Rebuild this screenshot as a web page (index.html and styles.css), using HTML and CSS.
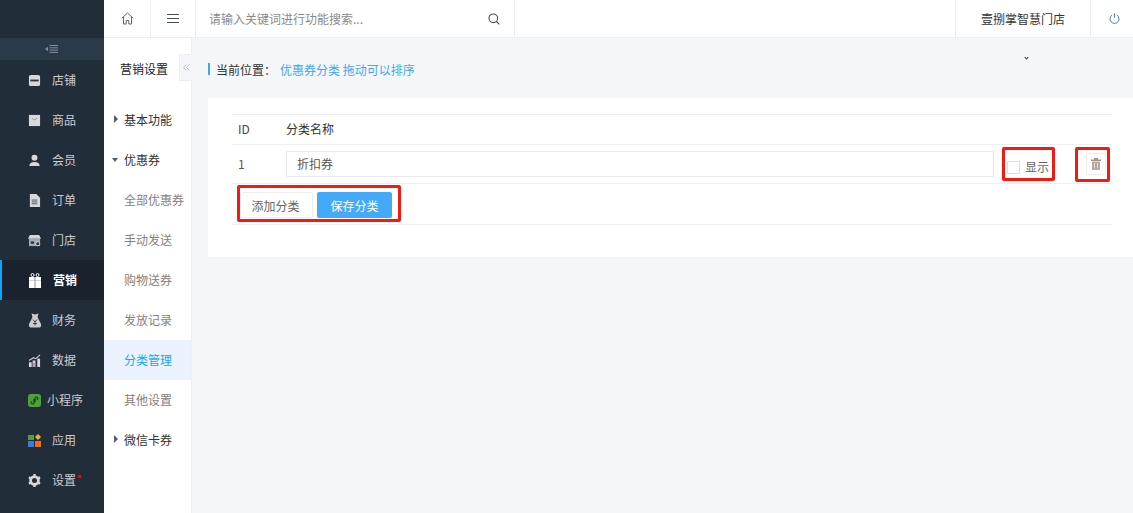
FILE: index.html
```html
<!DOCTYPE html>
<html lang="zh-CN">
<head>
<meta charset="utf-8">
<title>优惠券分类</title>
<link rel="stylesheet" href="styles.css">
</head>
<body>
<div class="app">
  <aside class="sidebar">
    <div class="logo"></div>
    <div class="collapse-bar">
      <svg width="14" height="10" viewBox="0 0 14 10"><path d="M0 5l3-2.200v4.400z" fill="#7f8c99"/><path d="M4.500 1.500h8.500M4.500 3.800h8.500M4.500 6.100h8.500M4.500 8.400h8.500" stroke="#7f8c99" stroke-width="1"/></svg>
    </div>
    <nav class="nav">
      <a class="nav-item"><svg class="nav-icon" viewBox="0 0 14 14"><rect x="1" y="1" width="12" height="12" rx="2" fill="#d6d8da"/><path d="M2.500 6h9v2h-9z" fill="#2a3542"/></svg><span class="nav-label">店铺</span></a>
      <a class="nav-item"><svg class="nav-icon" viewBox="0 0 14 14"><path d="M1 1h12v12H1z" fill="#d6d8da"/><path d="M4.500 4.500q2.500 3.500 5 0" fill="none" stroke="#8a929b"/></svg><span class="nav-label">商品</span></a>
      <a class="nav-item"><svg class="nav-icon" viewBox="0 0 14 14"><circle cx="7" cy="4" r="3.200" fill="#d6d8da"/><path d="M1.500 13q0-4.500 5.500-4.500T12.500 13z" fill="#d6d8da"/></svg><span class="nav-label">会员</span></a>
      <a class="nav-item"><svg class="nav-icon" viewBox="0 0 14 14"><path d="M2 0h7l4 4v10H2z" fill="#d6d8da"/><path d="M4 6.500h6M4 8.500h6M4 10.500h6" stroke="#4a5560"/></svg><span class="nav-label">订单</span></a>
      <a class="nav-item"><svg class="nav-icon" viewBox="0 0 14 14"><path d="M2 1h10l2 4H0z" fill="#d6d8da"/><path d="M1 5h12v8H1z" fill="#a3aab0"/><circle cx="10.500" cy="10.500" r="2.200" fill="#2a3542" stroke="#d6d8da"/><path d="M3 8h3.500v2.500H3z" fill="#2a3542"/></svg><span class="nav-label">门店</span></a>
      <a class="nav-item active"><svg class="nav-icon nav-icon-tall" viewBox="0 0 14 15"><path d="M1 4h12v11H1z" fill="#fff"/><path d="M1 7.500h12" stroke="#b8bcc2" stroke-width=".6"/><path d="M7 4v11" stroke="#8c939b" stroke-width="1"/><circle cx="4.500" cy="2" r="1.500" fill="none" stroke="#fff"/><circle cx="9.500" cy="2" r="1.500" fill="none" stroke="#fff"/></svg><span class="nav-label">营销</span></a>
      <a class="nav-item"><svg class="nav-icon nav-icon-tall" viewBox="0 0 14 15"><path d="M3.500 0.500l3.500 1 3.500-1L9.500 4l3.500 7q.5 3-1.500 3.500h-9Q.5 14 1 11l3.500-7z" fill="#c9cbce"/><path d="M5 6.500l2 2.500 2-2.500M7 9v3.500M5 10.500h4" stroke="#3a4656" fill="none"/></svg><span class="nav-label">财务</span></a>
      <a class="nav-item"><svg class="nav-icon" viewBox="0 0 14 14"><path d="M1 9h3v5H1zM5 7h3v7H5z" fill="#d6d8da"/><path d="M5.500 9.500v4.500M7.500 9.500v4.500" stroke="#b45aa5"/><path d="M10 5h3v9h-3z" fill="#d6d8da"/><path d="M1 7l5-3 2.500 1L13 1" fill="none" stroke="#c9ccd0" stroke-width="1.200"/></svg><span class="nav-label">数据</span></a>
      <a class="nav-item nav-wide"><svg class="nav-icon" viewBox="0 0 12 12"><rect width="12" height="12" rx="2.500" fill="#4ea03a"/><path d="M5.500 4.500v3.500a1.300 1.300 0 1 1-1.500-1.300M6.500 7.500V4a1.300 1.300 0 1 1 1.500 1.300" fill="none" stroke="#1d3a1a" stroke-width="1"/></svg><span class="nav-label">小程序</span></a>
      <a class="nav-item"><svg class="nav-icon" viewBox="0 0 13 13"><path d="M0 1h6v5H0z" fill="#4ea03a"/><path d="M10 0l3 3-3 3-3-3z" fill="#f0b429"/><path d="M0 7h6v6H0z" fill="#3f78e0"/><path d="M7 7h6v6H7z" fill="#ee6c1a"/></svg><span class="nav-label">应用</span></a>
      <a class="nav-item"><svg class="nav-icon" viewBox="0 0 14 14"><circle cx="7" cy="7" r="4.200" fill="none" stroke="#d6d8da" stroke-width="3"/><path d="M7 0v3M7 11v3M1 3.500l2.500 1.500M10.500 9l2.500 1.500M1 10.500L3.500 9M10.500 5L13 3.500" stroke="#d6d8da" stroke-width="2.500"/></svg><span class="nav-label dot">设置</span></a>
    </nav>
  </aside>

  <div class="workspace">
    <header class="topbar">
      <a class="top-btn"><svg width="13" height="13" viewBox="0 0 13 13" fill="none" stroke="#5a6570"><path d="M.8 6.200L6.500 1l5.700 5.200"/><path d="M2.500 5v7h2.700V8.500h2.600V12h2.700V5"/></svg></a>
      <a class="top-btn top-menu"><svg width="12" height="9" viewBox="0 0 12 9" stroke="#444c55"><path d="M0 .5h12M0 4.500h12M0 8.500h12"/></svg></a>
      <div class="search">
        <span class="search-text">请输入关键词进行功能搜索...</span>
        <svg width="12" height="12" viewBox="0 0 12 12" fill="none" stroke="#444c55" stroke-width="1.100"><circle cx="5.300" cy="5.300" r="4.300"/><path d="M8.500 8.500l2.800 2.800"/></svg>
      </div>
      <div class="top-spacer"></div>
      <div class="store">壹捌掌智慧门店</div>
      <a class="top-power"><svg width="11" height="11" viewBox="0 0 11 11" fill="none" stroke="#557b9f"><path d="M3.200 2a4.500 4.500 0 1 0 4.600 0"/><path d="M5.500 .3v4.400"/></svg></a>
    </header>

    <div class="body-row">
      <aside class="subnav">
        <div class="subnav-title">营销设置</div>
        <div class="collapse-tab">
          <svg width="7" height="7" viewBox="0 0 7 7" fill="none" stroke="#b4c0cc"><path d="M3.300.5L.7 3.500l2.600 3M6.300.5L3.700 3.500l2.600 3"/></svg>
        </div>
        <a class="sub-group"><i class="tri tri-right"></i>基本功能</a>
        <a class="sub-group"><i class="tri tri-down"></i>优惠券</a>
        <a class="sub-item">全部优惠券</a>
        <a class="sub-item">手动发送</a>
        <a class="sub-item">购物送券</a>
        <a class="sub-item">发放记录</a>
        <a class="sub-item current">分类管理</a>
        <a class="sub-item">其他设置</a>
        <a class="sub-group"><i class="tri tri-right"></i>微信卡券</a>
      </aside>

      <main class="content">
        <div class="crumb-row">
          <div class="crumb"><span class="crumb-label">当前位置：</span><span class="crumb-link">优惠券分类 拖动可以排序</span></div>
          <span class="caret"></span>
        </div>
        <section class="panel">
          <div class="table">
            <div class="row row-head">
              <div class="col-id">ID</div>
              <div class="col-name">分类名称</div>
            </div>
            <div class="row row-item">
              <div class="col-id id-value">1</div>
              <div class="col-name"><div class="text-input">折扣券</div></div>
              <div class="red-box show-box"><span class="checkbox"></span><span class="show-label">显示</span></div>
              <div class="red-box del-box"><span class="del-btn"><svg width="10" height="12" viewBox="0 0 10 12"><path d="M0 1.500h10v1.500H0zM3 0h4v1.500H3z" fill="#a2978f"/><path d="M1 3.500h8V12H1z" fill="#b5a9a2"/><path d="M3.500 5v5.500M6.500 5v5.500" stroke="#dfdbd8"/></svg></span></div>
            </div>
            <div class="row row-actions">
              <div class="red-box btn-box">
                <a class="btn btn-plain">添加分类</a>
                <a class="btn btn-primary">保存分类</a>
              </div>
            </div>
          </div>
        </section>
      </main>
    </div>
  </div>
</div>
</body>
</html>
```

FILE: styles.css
```css
* { box-sizing: border-box; }
html, body { margin: 0; padding: 0; height: 100%; }
body {
  font-family: "Noto Sans CJK SC", "Liberation Sans", sans-serif;
  font-size: 12px;
  color: #333;
  background: #f5f6f8;
  overflow: hidden;
}
a { color: inherit; text-decoration: none; }
.app { display: flex; width: 1133px; height: 513px; }

.sidebar { width: 104px; flex: none; background: #222d3a; display: flex; flex-direction: column; }
.logo { height: 38px; }
.collapse-bar { height: 22px; background: #2a3a4a; display: flex; align-items: center; justify-content: center; }
.nav { display: flex; flex-direction: column; }
.nav-item { height: 40px; display: flex; align-items: center; padding-left: 28px; color: #c9ccd0; gap: 11px; }
.nav-icon { width: 13px; height: 13px; flex: none; }
.nav-icon-tall { height: 15px; width: 14px; margin-right: -1px; }
.nav-item.active { background: #1a222d; color: #fff; font-weight: 700; box-shadow: inset 2px 0 0 #0fa4f5; }
.nav-item.active .nav-label { margin-left: 1px; }
.nav-wide { gap: 6px; }
.nav-label { line-height: 16px; position: relative; }
.dot::after { content: ""; position: absolute; right: -5px; top: 3px; width: 3px; height: 3px; background: #f00; }

.workspace { flex: 1; min-width: 0; display: flex; flex-direction: column; }
.topbar { height: 38px; flex: none; background: #fff; border-bottom: 1px solid #eceef0; display: flex; align-items: stretch; }
.top-btn { width: 47px; display: flex; align-items: center; justify-content: center; border-right: 1px solid #eceef0; }
.top-menu { width: 45px; }
.search { width: 319px; padding: 0 14px 0 13px; display: flex; align-items: center; justify-content: space-between; border-right: 1px solid #eceef0; }
.search-text { color: #8a8a8a; }
.top-spacer { flex: 1; }
.store { width: 136px; display: flex; align-items: center; justify-content: center; border-left: 1px solid #eceef0; border-right: 1px solid #eceef0; color: #333; }
.top-power { width: 42px; padding-left: 4px; display: flex; align-items: center; justify-content: center; }

.body-row { flex: 1; display: flex; min-height: 0; }
.subnav { width: 88px; flex: none; background: #fff; border-right: 1px solid #eceef0; position: relative; display: flex; flex-direction: column; }
.subnav-title { height: 62px; padding: 22px 0 0 16px; line-height: 18px; color: #222; }
.collapse-tab { position: absolute; left: 75px; top: 16px; width: 13px; height: 27px; background: #f4f5f8; border: 1px solid #eceef0; border-right: 0; display: flex; align-items: center; justify-content: center; }
.sub-group, .sub-item { height: 40px; display: flex; align-items: center; padding: 0 0 2px 20px; }
.sub-group { color: #333; position: relative; }
.sub-item { color: #85807c; }
.sub-item.current { background: #eaf3fd; color: #1ea5f5; }
.tri { position: absolute; width: 0; height: 0; border-style: solid; border-color: transparent; }
.tri-right { left: 10px; top: 15px; border-width: 4px 0 4px 4px; border-left-color: #555c66; }
.tri-down { left: 8px; top: 18px; border-width: 4px 3.500px 0; border-top-color: #555c66; }

.content { flex: 1; min-width: 0; padding-left: 16px; }
.crumb-row { height: 60px; display: flex; align-items: flex-start; position: relative; }
.crumb { margin-top: 25px; height: 12px; display: flex; align-items: center; border-left: 2px solid #3ea6f5; padding-left: 6px; }
.crumb-label { color: #333; }
.crumb-link { color: #3ea6f5; margin-left: 4px; }
.caret { position: absolute; left: 817px; top: 18px; width: 3px; height: 3px; border-right: 1px solid #333; border-bottom: 1px solid #333; transform: rotate(45deg); }

.panel { background: #fff; height: 159px; padding: 16px 21px 0 24px; }
.table { border-top: 1px solid #eceef0; }
.row { display: flex; align-items: center; border-bottom: 1px solid #eceef0; }
.row-head { height: 30px; padding-bottom: 2px; }
.row-item { height: 39px; position: relative; }
.row-actions { height: 41px; }
.col-id { width: 54px; padding-left: 6px; color: #444; }
.id-value { color: #555; margin-top: -1px; }
.col-name { width: 708px; color: #333; }
.text-input { height: 26px; border: 1px solid #e8e8e8; padding-left: 10px; line-height: 24px; color: #555; }
.red-box { border: 3px solid #f21a12; border-radius: 2px; display: flex; align-items: center; }
.show-box { width: 53px; height: 34px; margin-left: 8px; padding-left: 2px; }
.checkbox { width: 13px; height: 13px; border: 1px solid #dedede; margin-top: 6px; }
.show-label { margin-left: 5px; color: #666; margin-top: 5px; }
.del-box { width: 35px; height: 35px; margin-left: 20px; justify-content: flex-end; padding-right: 1px; }
.del-btn { width: 20px; height: 22px; border: 1px solid #eee; display: flex; align-items: center; justify-content: center; }
.btn-box { width: 164px; height: 37px; margin-left: 5px; margin-top: -1px; gap: 4px; }
.btn { height: 26px; margin-top: 3px; display: flex; align-items: center; justify-content: center; border-radius: 2px; }
.btn-plain { width: 73px; padding-right: 2px; border: 1px solid #eee; color: #666; }
.btn-primary { width: 75px; background: #44aaf8; color: #fff; }
```
